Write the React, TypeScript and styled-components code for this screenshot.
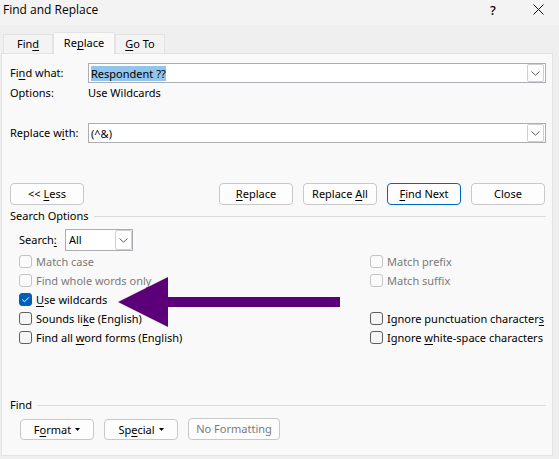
import React, { useEffect, useRef, useState } from "react";
import styled, { createGlobalStyle, css } from "styled-components";

const GlobalStyle = createGlobalStyle`
  * { box-sizing: border-box; }
  body {
    margin: 0;
    background: #efefef;
    color: #000;
    font: 11px/16px "Noto Sans", "Open Sans", sans-serif;
  }
  button, input, select { font: inherit; color: inherit; }
  u { text-underline-offset: 2px; text-decoration-skip-ink: none; }
`;

const Dialog = styled.main`
  min-height: 100vh;
  display: flex;
  flex-direction: column;
`;

const TitleBar = styled.header`
  display: flex;
  align-items: center;
  height: 25px;
  padding: 0 15px 6px 3px;
  background: #f3f3f3;
`;

const Title = styled.h1`
  flex: 1;
  margin: 0;
  font-family: "Open Sans", "Noto Sans", sans-serif;
  font-size: 12px;
  font-weight: 400;
  line-height: 18px;
`;

const TitleButton = styled.button`
  display: flex;
  align-items: center;
  justify-content: center;
  width: 12px;
  height: 16px;
  margin-left: 33px;
  padding: 0;
  border: 0;
  background: none;
  font-size: 13px;
  font-weight: 500;
`;

const TabList = styled.div`
  display: flex;
  align-items: flex-end;
  height: 28px;
  padding-left: 3px;
`;

const Tab = styled.button<{ $active?: boolean }>`
  width: 50px;
  height: 19px;
  padding: 0;
  border: 1px solid #e3e3e3;
  border-bottom: 0;
  background: #f3f3f3;
  ${(p) =>
    p.$active &&
    css`
      width: 62px;
      height: 22px;
      margin-bottom: -1px;
      padding-bottom: 1px;
      border-radius: 2px 2px 0 0;
      background: #f9f9f9;
      z-index: 1;
    `}
`;

const Panel = styled.section`
  flex: 1;
  margin: 0 6px 3px 1px;
  padding: 9px 6px 13px 8px;
  border: 1px solid #e3e3e3;
  background: #f9f9f9;
`;

const FieldRow = styled.div`
  display: flex;
  align-items: center;
`;

const FieldLabel = styled.label`
  width: 78px;
  white-space: nowrap;
`;

const OptionsRow = styled(FieldRow)`
  height: 20px;
  margin-bottom: 20px;
`;

const ComboBox = styled.div`
  flex: 1;
  display: flex;
  height: 20px;
  padding: 0 1px;
  border: 1px solid #abadb3;
  background: #fff;
`;

const ComboInput = styled.input`
  flex: 1;
  min-width: 0;
  height: 18px;
  padding: 0 0 0 1px;
  border: 0;
  outline: 0;
  background: none;
  line-height: 14px;
  &::selection {
    background: rgba(145, 196, 236, 0.99);
    color: #000;
  }
`;

const DropButton = styled.button`
  display: flex;
  align-items: center;
  justify-content: center;
  width: 17px;
  padding: 0;
  border: 1px solid #cfcfd3;
  border-radius: 2px;
  background: #fff;
`;

const Actions = styled.div`
  display: flex;
  gap: 10px;
  margin: 40px 1px 0 0;
`;

const PushButton = styled.button<{ $primary?: boolean }>`
  width: 74px;
  height: 22px;
  padding: 0;
  border: 1px solid ${(p) => (p.$primary ? "#0067c0" : "#c8c8c8")};
  border-radius: 4px;
  background: #fdfdfd;
  white-space: nowrap;
  &:disabled { color: #7a7a7a; }
`;

const LessButton = styled(PushButton)`
  margin-right: auto;
`;

const SectionHeading = styled.h2`
  display: flex;
  align-items: center;
  gap: 5px;
  margin: 0;
  font-size: 11px;
  font-weight: 400;
  line-height: 16px;
  &::after {
    content: "";
    flex: 1;
    height: 1px;
    background: #dcdcdc;
  }
`;

const SearchSection = styled.section`
  margin-top: 3px;
`;

const SearchRow = styled.div`
  display: flex;
  align-items: center;
  height: 22px;
  margin: 5px 0 1px 9px;
`;

const SearchLabel = styled.label`
  width: 46px;
`;

const SelectBox = styled.div`
  position: relative;
  width: 68px;
`;

const Select = styled.select`
  appearance: none;
  display: block;
  width: 100%;
  height: 22px;
  padding: 0 20px 0 3px;
  border: 1px solid #abadb3;
  border-radius: 0;
  outline: 0;
  background: #fff;
`;

const SelectMark = styled.span`
  position: absolute;
  top: 1px;
  right: 1px;
  bottom: 1px;
  display: flex;
  align-items: center;
  justify-content: center;
  width: 17px;
  border: 1px solid #cfcfd3;
  border-radius: 2px;
  pointer-events: none;
`;

const CheckColumns = styled.div`
  position: relative;
  display: flex;
  justify-content: space-between;
  padding-left: 9px;
`;

const CheckColumn = styled.div`
  display: grid;
  grid-template-rows: repeat(5, 19px);
`;

const RightColumn = styled(CheckColumn)`
  width: 176px;
`;

const CheckLabel = styled.label<{ $row?: number; $disabled?: boolean }>`
  display: flex;
  align-items: center;
  gap: 4px;
  grid-row: ${(p) => p.$row ?? "auto"};
  color: ${(p) => (p.$disabled ? "#7a7a7a" : "#000")};
  white-space: nowrap;
`;

const CheckSlot = styled.span`
  display: grid;
  width: 13px;
  height: 13px;
  > * { grid-area: 1 / 1; }
`;

const CheckInput = styled.input`
  appearance: none;
  width: 13px;
  height: 13px;
  margin: 0;
  border: 1px solid #5f5f5f;
  border-radius: 3px;
  background: #f6f6f6;
  &:disabled { border-color: #c4c4c4; background: #fbfbfb; }
  &:checked { border-color: #005fb8; background: #005fb8; }
`;

const Tick = styled.svg`
  pointer-events: none;
`;

const Arrow = styled.svg`
  position: absolute;
  left: 108px;
  top: 25px;
  pointer-events: none;
`;

const FindSection = styled.section`
  margin-top: 50px;
`;

const FormatRow = styled.div`
  display: flex;
  align-items: flex-end;
  gap: 10px;
  margin: 5px 0 0 10px;
`;

const MenuButton = styled(PushButton)`
  display: flex;
  align-items: center;
  justify-content: center;
  gap: 4px;
  height: 21px;
`;

const WideButton = styled(PushButton)`
  width: 92px;
`;

const Chevron = () => (
  <svg width="9" height="5" viewBox="0 0 9 5" fill="none" stroke="#5a5a5a" aria-hidden="true">
    <path d="M.5 .5 4.5 4.2 8.5 .5" />
  </svg>
);

const Caret = () => (
  <svg width="5" height="3" viewBox="0 0 5 3" aria-hidden="true">
    <path d="M0 0H5L2.5 3Z" />
  </svg>
);

type CheckProps = {
  children: React.ReactNode;
  row?: number;
  disabled?: boolean;
  initial?: boolean;
};

function Check({ children, row, disabled, initial = false }: CheckProps) {
  const [on, setOn] = useState(initial);
  return (
    <CheckLabel $row={row} $disabled={disabled}>
      <CheckSlot>
        <CheckInput
          type="checkbox"
          checked={on}
          disabled={disabled}
          onChange={(e) => setOn(e.target.checked)}
        />
        {on && (
          <Tick width="13" height="13" viewBox="0 0 13 13" fill="none" stroke="#fff">
            <path d="M3.2 6.5 5.5 8.8 10 4.3" />
          </Tick>
        )}
      </CheckSlot>
      <span>{children}</span>
    </CheckLabel>
  );
}

export default function App() {
  const findRef = useRef<HTMLInputElement>(null);

  useEffect(() => {
    findRef.current?.focus();
    findRef.current?.select();
  }, []);

  return (
    <>
      <GlobalStyle />
      <Dialog>
        <TitleBar>
          <Title>Find and Replace</Title>
          <TitleButton aria-label="Help">?</TitleButton>
          <TitleButton aria-label="Close dialog">
            <svg width="11" height="11" viewBox="0 0 11 11" fill="none" stroke="#111">
              <path d="M.5 .5 10.5 10.5M10.5 .5 .5 10.5" />
            </svg>
          </TitleButton>
        </TitleBar>

        <TabList role="tablist">
          <Tab role="tab">Fin<u>d</u></Tab>
          <Tab role="tab" aria-selected $active>Re<u>p</u>lace</Tab>
          <Tab role="tab"><u>G</u>o To</Tab>
        </TabList>

        <Panel>
          <FieldRow>
            <FieldLabel htmlFor="find">Fi<u>n</u>d what:</FieldLabel>
            <ComboBox>
              <ComboInput id="find" ref={findRef} defaultValue="Respondent ??" />
              <DropButton aria-label="Recent searches"><Chevron /></DropButton>
            </ComboBox>
          </FieldRow>
          <OptionsRow>
            <FieldLabel as="span">Options:</FieldLabel>
            <span>Use Wildcards</span>
          </OptionsRow>
          <FieldRow>
            <FieldLabel htmlFor="replace">Replace w<u>i</u>th:</FieldLabel>
            <ComboBox>
              <ComboInput id="replace" defaultValue="(^&amp;)" />
              <DropButton aria-label="Recent replacements"><Chevron /></DropButton>
            </ComboBox>
          </FieldRow>

          <Actions>
            <LessButton>&lt;&lt; <u>L</u>ess</LessButton>
            <PushButton><u>R</u>eplace</PushButton>
            <PushButton>Replace <u>A</u>ll</PushButton>
            <PushButton $primary><u>F</u>ind Next</PushButton>
            <PushButton>Close</PushButton>
          </Actions>

          <SearchSection>
            <SectionHeading>Search Options</SectionHeading>
            <SearchRow>
              <SearchLabel htmlFor="direction">Search<u>:</u></SearchLabel>
              <SelectBox>
                <Select id="direction" defaultValue="All">
                  <option>All</option>
                  <option>Down</option>
                  <option>Up</option>
                </Select>
                <SelectMark><Chevron /></SelectMark>
              </SelectBox>
            </SearchRow>
            <CheckColumns>
              <CheckColumn>
                <Check disabled>Match case</Check>
                <Check disabled>Find whole words only</Check>
                <Check initial><u>U</u>se wildcards</Check>
                <Check>Sounds li<u>k</u>e (English)</Check>
                <Check>Find all <u>w</u>ord forms (English)</Check>
              </CheckColumn>
              <RightColumn>
                <Check disabled>Match prefix</Check>
                <Check disabled>Match suffix</Check>
                <Check row={4}>Ignore punctuation character<u>s</u></Check>
                <Check row={5}>Ignore <u>w</u>hite-space characters</Check>
              </RightColumn>
              <Arrow width="222" height="50" viewBox="0 0 222 50" fill="#5c007a" aria-hidden="true">
                <path d="M0 25 50 0V20H222V30H50V50Z" />
              </Arrow>
            </CheckColumns>
          </SearchSection>

          <FindSection>
            <SectionHeading>Find</SectionHeading>
            <FormatRow>
              <MenuButton><span>F<u>o</u>rmat</span><Caret /></MenuButton>
              <MenuButton><span>Sp<u>e</u>cial</span><Caret /></MenuButton>
              <WideButton disabled>No Formatting</WideButton>
            </FormatRow>
          </FindSection>
        </Panel>
      </Dialog>
    </>
  );
}
